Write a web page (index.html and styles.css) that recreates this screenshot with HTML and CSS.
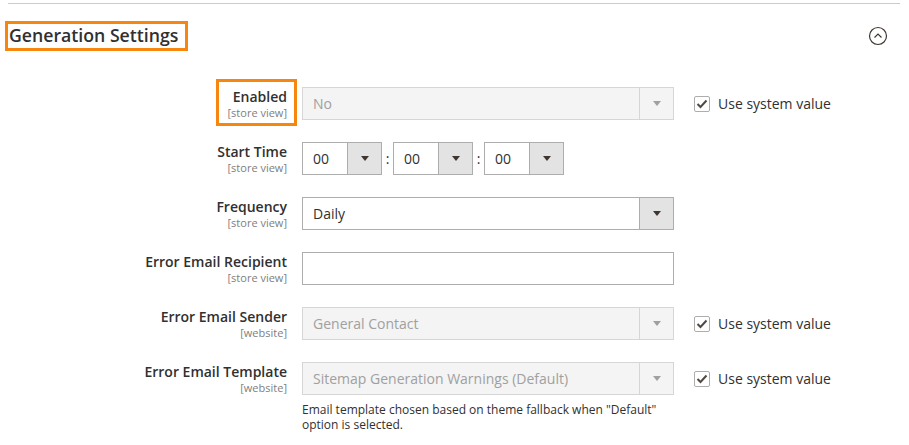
FILE: index.html
```html
<!DOCTYPE html>
<html lang="en">
<head>
    <meta charset="UTF-8">
    <meta name="viewport" content="width=device-width, initial-scale=1.0">
    <title>Generation Settings</title>
    <link rel="stylesheet" href="styles.css">
</head>
<body>
    <div class="topline"></div>

    <div class="section-header">
        <h2 class="section-title">Generation Settings</h2>
        <svg class="collapse-icon" width="20" height="20" viewBox="0 0 20 20">
            <circle cx="10" cy="10" r="8.5" fill="none" stroke="#41362f" stroke-width="1.2"/>
            <polyline points="6.5,11.5 10,8 13.5,11.5" fill="none" stroke="#41362f" stroke-width="1.2"/>
        </svg>
    </div>

    <form class="config-form">
        <div class="field">
            <div class="field-label">
                <span class="label-text highlight">Enabled<span class="scope">[store view]</span></span>
            </div>
            <div class="control">
                <div class="select is-disabled">
                    <span class="select-value">No</span>
                    <span class="select-arrow"><i class="caret"></i></span>
                </div>
            </div>
            <label class="use-default">
                <span class="checkbox"><svg width="12" height="10" viewBox="0 0 12 10"><polyline points="1.5,5 4.5,8 10.5,1.5" fill="none" stroke="#514943" stroke-width="2"/></svg></span>
                Use system value
            </label>
        </div>

        <div class="field">
            <div class="field-label">
                <span class="label-text">Start Time<span class="scope">[store view]</span></span>
            </div>
            <div class="control time-control">
                <div class="select time-select">
                    <span class="select-value">00</span>
                    <span class="select-arrow"><i class="caret"></i></span>
                </div>
                <span class="time-sep">:</span>
                <div class="select time-select">
                    <span class="select-value">00</span>
                    <span class="select-arrow"><i class="caret"></i></span>
                </div>
                <span class="time-sep">:</span>
                <div class="select time-select">
                    <span class="select-value">00</span>
                    <span class="select-arrow"><i class="caret"></i></span>
                </div>
            </div>
        </div>

        <div class="field">
            <div class="field-label">
                <span class="label-text">Frequency<span class="scope">[store view]</span></span>
            </div>
            <div class="control">
                <div class="select">
                    <span class="select-value">Daily</span>
                    <span class="select-arrow"><i class="caret"></i></span>
                </div>
            </div>
        </div>

        <div class="field">
            <div class="field-label">
                <span class="label-text">Error Email Recipient<span class="scope">[store view]</span></span>
            </div>
            <div class="control">
                <input type="text" class="text-input">
            </div>
        </div>

        <div class="field">
            <div class="field-label">
                <span class="label-text">Error Email Sender<span class="scope">[website]</span></span>
            </div>
            <div class="control">
                <div class="select is-disabled">
                    <span class="select-value">General Contact</span>
                    <span class="select-arrow"><i class="caret"></i></span>
                </div>
            </div>
            <label class="use-default">
                <span class="checkbox"><svg width="12" height="10" viewBox="0 0 12 10"><polyline points="1.5,5 4.5,8 10.5,1.5" fill="none" stroke="#514943" stroke-width="2"/></svg></span>
                Use system value
            </label>
        </div>

        <div class="field">
            <div class="field-label">
                <span class="label-text">Error Email Template<span class="scope">[website]</span></span>
            </div>
            <div class="control">
                <div class="select is-disabled">
                    <span class="select-value">Sitemap Generation Warnings (Default)</span>
                    <span class="select-arrow"><i class="caret"></i></span>
                </div>
                <p class="note">Email template chosen based on theme fallback when "Default" option is selected.</p>
            </div>
            <label class="use-default">
                <span class="checkbox"><svg width="12" height="10" viewBox="0 0 12 10"><polyline points="1.5,5 4.5,8 10.5,1.5" fill="none" stroke="#514943" stroke-width="2"/></svg></span>
                Use system value
            </label>
        </div>
    </form>
</body>
</html>
```

FILE: styles.css
```css
body {
    margin: 0;
    font-family: "Open Sans", "Liberation Sans", sans-serif;
    color: #303030;
    background: #fff;
}
.topline {
    margin: 3px 9px 0 8px;
    border-top: 1px solid #cccccc;
}
.section-header {
    display: flex;
    justify-content: space-between;
    align-items: center;
    margin-top: 17px;
    padding: 0 21px 0 5px;
}
.section-title {
    margin: 0;
    font-size: 17.7px;
    font-weight: 600;
    line-height: 22px;
    color: #303030;
    border: 3px solid #f7860f;
    padding: 0 7px 2px 1px;
}
.collapse-icon {
    display: block;
}
.config-form {
    margin-top: 36px;
}
.field {
    display: grid;
    grid-template-columns: 287px 372px auto;
    column-gap: 15px;
    align-items: start;
    margin-bottom: 22px;
}
.field-label {
    display: flex;
    justify-content: flex-end;
    text-align: right;
    padding-top: 1px;
}
.label-text {
    display: block;
    position: relative;
    font-size: 14px;
    font-weight: 600;
    line-height: 18px;
}
.scope {
    display: block;
    font-size: 11px;
    font-weight: 400;
    line-height: 13px;
    color: #808080;
}
.highlight::before {
    content: "";
    position: absolute;
    top: -9px;
    right: -10px;
    bottom: -7px;
    left: -12px;
    border: 3px solid #f7860f;
}
.control {
    min-width: 0;
}
.select {
    display: flex;
    height: 33px;
    box-sizing: border-box;
    border: 1px solid #adadad;
    background: #fff;
    font-size: 14px;
    line-height: 31px;
}
.select-value {
    flex: 1;
    padding: 0 10px;
    white-space: nowrap;
    overflow: hidden;
}
.select-arrow {
    width: 33px;
    border-left: 1px solid #adadad;
    background: #e3e3e3;
    display: flex;
    align-items: center;
    justify-content: center;
}
.caret {
    display: block;
    width: 0;
    height: 0;
    border-left: 4px solid transparent;
    border-right: 4px solid transparent;
    border-top: 5px solid #41362f;
}
.select.is-disabled {
    background: #f4f4f4;
    border-color: #d6d6d6;
    color: #a0a0a0;
}
.select.is-disabled .select-arrow {
    background: #f4f4f4;
    border-left-color: #d6d6d6;
}
.select.is-disabled .caret {
    border-top-color: #a0a0a0;
}
.time-control {
    display: flex;
    align-items: center;
}
.time-select {
    width: 80px;
}
.time-sep {
    width: 11px;
    text-align: center;
    font-size: 14px;
}
.text-input {
    display: block;
    width: 100%;
    height: 33px;
    box-sizing: border-box;
    margin: 0;
    border: 1px solid #adadad;
    border-radius: 0;
    padding: 0 10px;
    font-family: inherit;
    font-size: 14px;
}
.note {
    margin: 7px 0 0;
    font-size: 12px;
    line-height: 15px;
    color: #303030;
}
.use-default {
    display: flex;
    align-items: center;
    height: 33px;
    margin-left: 5px;
    font-size: 14px;
    color: #303030;
}
.checkbox {
    display: flex;
    align-items: center;
    justify-content: center;
    width: 16px;
    height: 16px;
    box-sizing: border-box;
    border: 1px solid #adadad;
    border-radius: 2px;
    margin-right: 8px;
}
```
